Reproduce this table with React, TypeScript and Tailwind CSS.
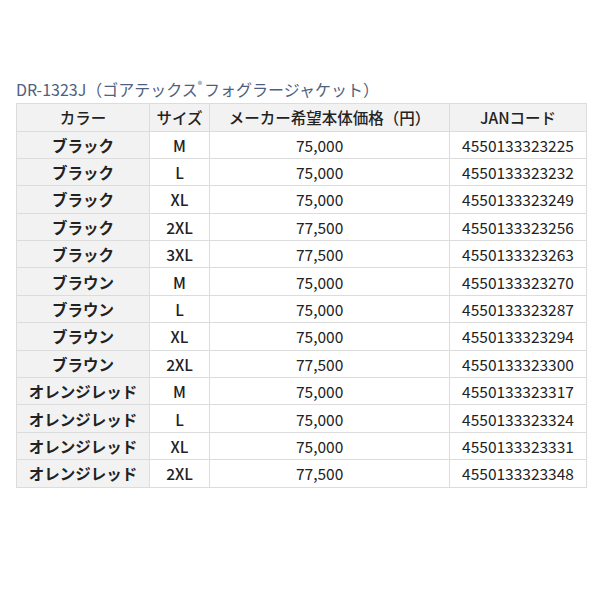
import React from "react";

const rows: [string, string, string, string][] = [
  ["ブラック", "M", "75,000", "4550133323225"],
  ["ブラック", "L", "75,000", "4550133323232"],
  ["ブラック", "XL", "75,000", "4550133323249"],
  ["ブラック", "2XL", "77,500", "4550133323256"],
  ["ブラック", "3XL", "77,500", "4550133323263"],
  ["ブラウン", "M", "75,000", "4550133323270"],
  ["ブラウン", "L", "75,000", "4550133323287"],
  ["ブラウン", "XL", "75,000", "4550133323294"],
  ["ブラウン", "2XL", "77,500", "4550133323300"],
  ["オレンジレッド", "M", "75,000", "4550133323317"],
  ["オレンジレッド", "L", "75,000", "4550133323324"],
  ["オレンジレッド", "XL", "75,000", "4550133323331"],
  ["オレンジレッド", "2XL", "77,500", "4550133323348"],
];

export default function App() {
  return (
    <div
      className="w-[600px] h-[600px] bg-white pt-[77px] pl-[16px]"
      style={{ fontFamily: '"Noto Sans CJK JP", "Noto Sans", sans-serif' }}
    >
      <div className="text-[16px] leading-[24px] text-[#4f5f7d] mb-[2px] whitespace-nowrap">
        DR-1323J（ゴアテックス<span className="inline-block text-[9px] leading-[9px] align-top relative top-[3px] mr-[2px]">®</span>フォグラージャケット）
      </div>
      <table className="border-collapse text-[15.5px] text-[#222] leading-[20px]">
        <thead>
          <tr className="h-[27.5px] bg-[#f2f2f2]">
            <th className="w-[133px] border border-[#dcdcdc] font-medium text-center">カラー</th>
            <th className="w-[60px] border border-[#dcdcdc] font-medium text-center">サイズ</th>
            <th className="w-[240px] border border-[#dcdcdc] font-medium text-center">メーカー希望本体価格（円）</th>
            <th className="w-[137px] border border-[#dcdcdc] font-medium text-center">JANコード</th>
          </tr>
        </thead>
        <tbody>
          {rows.map((r, i) => (
            <tr key={i} className="h-[27.4px]">
              <td className="border border-[#dcdcdc] bg-[#f2f2f2] font-bold text-center">{r[0]}</td>
              <td className="border border-[#dcdcdc] font-medium text-center">{r[1]}</td>
              <td className="border border-[#dcdcdc] pl-[86px]">{r[2]}</td>
              <td className="border border-[#dcdcdc] text-center">{r[3]}</td>
            </tr>
          ))}
        </tbody>
      </table>
    </div>
  );
}
